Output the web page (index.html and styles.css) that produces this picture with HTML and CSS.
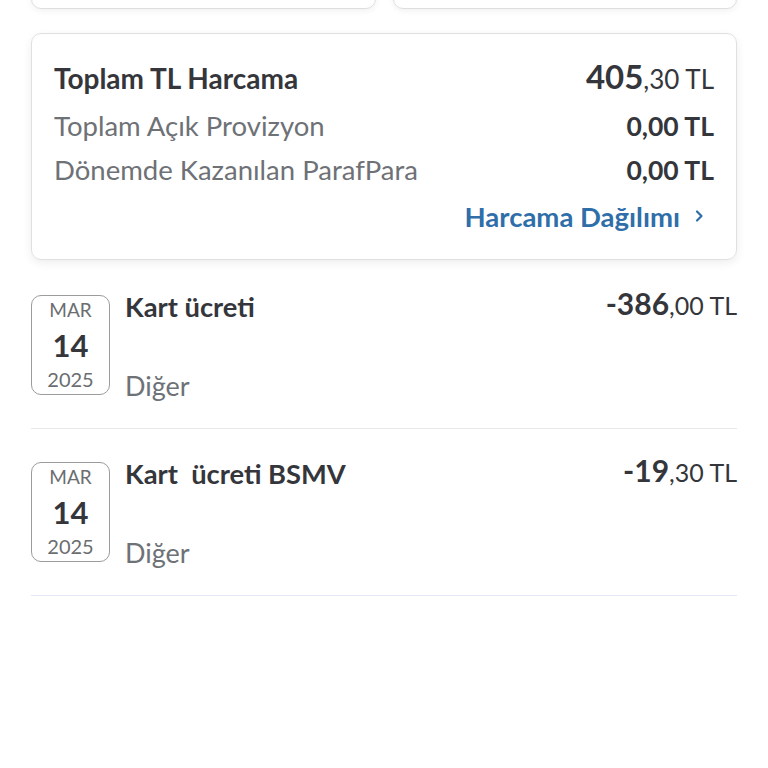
FILE: index.html
```html
<!DOCTYPE html>
<html>
<head>
  <title>Harcamalar</title>
  <link rel="stylesheet" href="styles.css">
</head>
<body>

  <div class="page">

    <div class="top-cards">
      <div class="mini-card"></div>
      <div class="mini-card"></div>
    </div>

    <div class="summary">
      <div class="sum-row main">
        <span class="sum-title">Toplam TL Harcama</span>
        <span class="sum-total"><b>405</b>,30 TL</span>
      </div>
      <div class="sum-row">
        <span class="sum-label">Toplam Açık Provizyon</span>
        <span class="sum-value">0,00 TL</span>
      </div>
      <div class="sum-row">
        <span class="sum-label">Dönemde Kazanılan ParafPara</span>
        <span class="sum-value">0,00 TL</span>
      </div>
      <div class="sum-link">
        <a href="#">Harcama Dağılımı</a>
        <svg width="10" height="14" viewBox="0 0 10 14">
          <path d="M3 2.5 L7.5 7 L3 11.5" fill="none" stroke="#2f6ea9" stroke-width="2.2" stroke-linecap="round" stroke-linejoin="round"/>
        </svg>
      </div>
    </div>

    <div class="tx-list">
      <div class="tx">
        <div class="date-box">
          <span class="month">MAR</span>
          <span class="day">14</span>
          <span class="year">2025</span>
        </div>
        <div class="tx-info">
          <span class="tx-title">Kart ücreti</span>
          <span class="tx-cat">Diğer</span>
        </div>
        <div class="tx-amount"><b>-386</b>,00 TL</div>
      </div>

      <div class="tx last">
        <div class="date-box">
          <span class="month">MAR</span>
          <span class="day">14</span>
          <span class="year">2025</span>
        </div>
        <div class="tx-info">
          <span class="tx-title">Kart&nbsp; ücreti BSMV</span>
          <span class="tx-cat">Diğer</span>
        </div>
        <div class="tx-amount"><b>-19</b>,30 TL</div>
      </div>
    </div>

  </div>

</body>
</html>
```

FILE: styles.css
```css
body {
  font-family: 'Lato', 'Noto Sans', sans-serif;
  background: #ffffff;
  color: #34363b;
  margin: 0;
  height: 768px;
  overflow: hidden;
}

.page {
  padding: 0 31px;
}

.top-cards {
  display: flex;
  gap: 17px;
  margin-top: -51px;
}

.mini-card {
  flex: 1;
  height: 58px;
  border: 1px solid #dedede;
  border-radius: 10px;
  box-shadow: 0 2px 6px rgba(0, 0, 0, 0.06);
}

.summary {
  margin-top: 24px;
  border: 1px solid #e0e0e0;
  border-radius: 10px;
  padding: 19px 22px 21px;
  box-shadow: 0 3px 10px rgba(0, 0, 0, 0.07);
}

.sum-row {
  display: flex;
  justify-content: space-between;
  align-items: baseline;
  height: 44px;
  line-height: 44px;
}

.sum-row.main {
  height: 46px;
  line-height: 46px;
}

.sum-row.main + .sum-row {
  margin-top: 5px;
}

.sum-title {
  font-size: 28px;
  font-weight: 700;
}

.sum-total {
  font-size: 26px;
}

.sum-total b {
  font-size: 33px;
  font-weight: 700;
}

.sum-label {
  font-size: 27.5px;
  color: #6e7176;
}

.sum-value {
  font-size: 26.5px;
  font-weight: 700;
}

.sum-link {
  display: flex;
  justify-content: flex-end;
  align-items: center;
  gap: 14px;
  margin-top: 2px;
  padding-right: 10px;
  height: 44px;
}

.sum-link a {
  color: #2f6ea9;
  font-size: 27.5px;
  font-weight: 700;
  text-decoration: none;
}

.tx-list {
  margin-top: 2px;
}

.tx {
  display: flex;
  gap: 15px;
  padding: 33px 0;
  border-bottom: 1px solid #e8e8e8;
}

.tx.last {
  border-bottom-color: #e2e9f6;
}

.date-box {
  width: 77px;
  height: 98px;
  border: 1px solid #9c9c9c;
  border-radius: 10px;
  display: flex;
  flex-direction: column;
  align-items: center;
  color: #6b6d70;
}

.month {
  font-size: 19px;
  line-height: 28px;
}

.day {
  font-size: 31px;
  font-weight: 700;
  line-height: 42px;
  color: #34363b;
}

.year {
  font-size: 20px;
  line-height: 26px;
}

.tx-info {
  flex: 1;
  display: flex;
  flex-direction: column;
  justify-content: space-between;
}

.tx-title {
  font-size: 27.3px;
  font-weight: 700;
  line-height: 24px;
}

.tx-cat {
  font-size: 27px;
  color: #6e7176;
  line-height: 30px;
  margin-bottom: -6px;
}

.tx-amount {
  font-size: 25px;
  line-height: 20px;
  margin-top: -2px;
}

.tx-amount b {
  font-size: 30px;
  font-weight: 700;
}
```
